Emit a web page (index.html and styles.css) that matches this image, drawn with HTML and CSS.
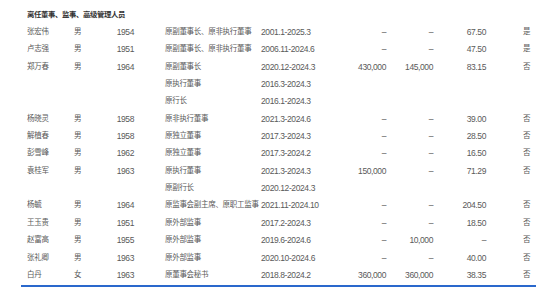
FILE: index.html
```html
<!DOCTYPE html>
<html>
<head>
    <meta charset="utf-8">
    <link rel="stylesheet" href="styles.css">
</head>
<body>
    <div class="sheet">
        <table class="roster">
            <colgroup>
                <col class="w-name"><col class="w-sex"><col class="w-year"><col class="w-post">
                <col class="w-term"><col class="w-num"><col class="w-num2"><col class="w-pay"><col class="w-flag">
            </colgroup>
            <tr class="caption"><td colspan="9">离任董事、监事、高级管理人员</td></tr>
            <tr><td class="cn">张宏伟</td><td class="cn">男</td><td class="num">1954</td><td class="cn">原副董事长、原非执行董事</td><td>2001.1-2025.3</td><td class="num">–</td><td class="num">–</td><td class="num">67.50</td><td class="cn">是</td></tr>
            <tr><td class="cn">卢志强</td><td class="cn">男</td><td class="num">1951</td><td class="cn">原副董事长、原非执行董事</td><td>2006.11-2024.6</td><td class="num">–</td><td class="num">–</td><td class="num">47.50</td><td class="cn">是</td></tr>
            <tr><td class="cn">郑万春</td><td class="cn">男</td><td class="num">1964</td><td class="cn">原副董事长</td><td>2020.12-2024.3</td><td class="num">430,000</td><td class="num">145,000</td><td class="num">83.15</td><td class="cn">否</td></tr>
            <tr><td></td><td></td><td></td><td class="cn">原执行董事</td><td>2016.3-2024.3</td><td></td><td></td><td></td><td></td></tr>
            <tr><td></td><td></td><td></td><td class="cn">原行长</td><td>2016.1-2024.3</td><td></td><td></td><td></td><td></td></tr>
            <tr><td class="cn">杨晓灵</td><td class="cn">男</td><td class="num">1958</td><td class="cn">原非执行董事</td><td>2021.3-2024.6</td><td class="num">–</td><td class="num">–</td><td class="num">39.00</td><td class="cn">否</td></tr>
            <tr><td class="cn">解植春</td><td class="cn">男</td><td class="num">1958</td><td class="cn">原独立董事</td><td>2017.3-2024.3</td><td class="num">–</td><td class="num">–</td><td class="num">28.50</td><td class="cn">否</td></tr>
            <tr><td class="cn">彭雪峰</td><td class="cn">男</td><td class="num">1962</td><td class="cn">原独立董事</td><td>2017.3-2024.2</td><td class="num">–</td><td class="num">–</td><td class="num">16.50</td><td class="cn">否</td></tr>
            <tr><td class="cn">袁桂军</td><td class="cn">男</td><td class="num">1963</td><td class="cn">原执行董事</td><td>2021.3-2024.3</td><td class="num">150,000</td><td class="num">–</td><td class="num">71.29</td><td class="cn">否</td></tr>
            <tr><td></td><td></td><td></td><td class="cn">原副行长</td><td>2020.12-2024.3</td><td></td><td></td><td></td><td></td></tr>
            <tr><td class="cn">杨毓</td><td class="cn">男</td><td class="num">1964</td><td class="cn">原监事会副主席、原职工监事</td><td>2021.11-2024.10</td><td class="num">–</td><td class="num">–</td><td class="num">204.50</td><td class="cn">否</td></tr>
            <tr><td class="cn">王玉贵</td><td class="cn">男</td><td class="num">1951</td><td class="cn">原外部监事</td><td>2017.2-2024.3</td><td class="num">–</td><td class="num">–</td><td class="num">18.50</td><td class="cn">否</td></tr>
            <tr><td class="cn">赵富高</td><td class="cn">男</td><td class="num">1955</td><td class="cn">原外部监事</td><td>2019.6-2024.6</td><td class="num">–</td><td class="num">10,000</td><td class="num">–</td><td class="cn">否</td></tr>
            <tr><td class="cn">张礼卿</td><td class="cn">男</td><td class="num">1963</td><td class="cn">原外部监事</td><td>2020.10-2024.6</td><td class="num">–</td><td class="num">–</td><td class="num">40.00</td><td class="cn">否</td></tr>
            <tr><td class="cn">白丹</td><td class="cn">女</td><td class="num">1963</td><td class="cn">原董事会秘书</td><td>2018.8-2024.2</td><td class="num">360,000</td><td class="num">360,000</td><td class="num">38.35</td><td class="cn">否</td></tr>
        </table>
        <div class="rule"></div>
    </div>
</body>
</html>
```

FILE: styles.css
```css
body {
    margin: 0;
    background: #fff;
}
.sheet {
    padding: 5.8px 0 0 21px;
    width: 515px;
}
.roster {
    width: 515px;
    table-layout: fixed;
    border-collapse: collapse;
    font-family: "Liberation Sans Narrow", "Liberation Sans", "Noto Sans CJK SC", sans-serif;
    font-size: 8.5px;
    letter-spacing: -0.4px;
    color: #5a5a5a;
}
.roster td {
    height: 17.36px;
    padding: 0;
    white-space: nowrap;
    vertical-align: middle;
    line-height: 10px;
}
.roster .cn {
    font-size: 7.5px;
    letter-spacing: -0.3px;
}
.roster .num {
    text-align: right;
}
.caption td {
    font-family: "Noto Sans CJK SC", sans-serif;
    font-size: 7.4px;
    letter-spacing: -0.4px;
    font-weight: bold;
    color: #333;
    padding-left: 6px;
}

/* column widths and insets */
.w-name { width: 45px; }
.w-sex { width: 44px; }
.w-year { width: 48px; }
.w-post { width: 97px; }
.w-term { width: 85px; }
.w-num { width: 52px; }
.w-num2 { width: 47px; }
.w-pay { width: 53px; }
.w-flag { width: 44px; }
.roster td:nth-child(1) { padding-left: 6px; }
.roster td:nth-child(2) { padding-left: 8px; }
.roster td:nth-child(3) { padding-right: 24px; }
.roster td:nth-child(4) { padding-left: 7px; }
.roster td:nth-child(5) { padding-left: 6px; }
.roster td:nth-child(6),
.roster td:nth-child(7),
.roster td:nth-child(8) { padding-right: 6px; }
.roster td:nth-child(9) { padding-left: 31px; }

.rule {
    margin-top: 1.6px;
    height: 2px;
    background: #2a68cc;
}
```
